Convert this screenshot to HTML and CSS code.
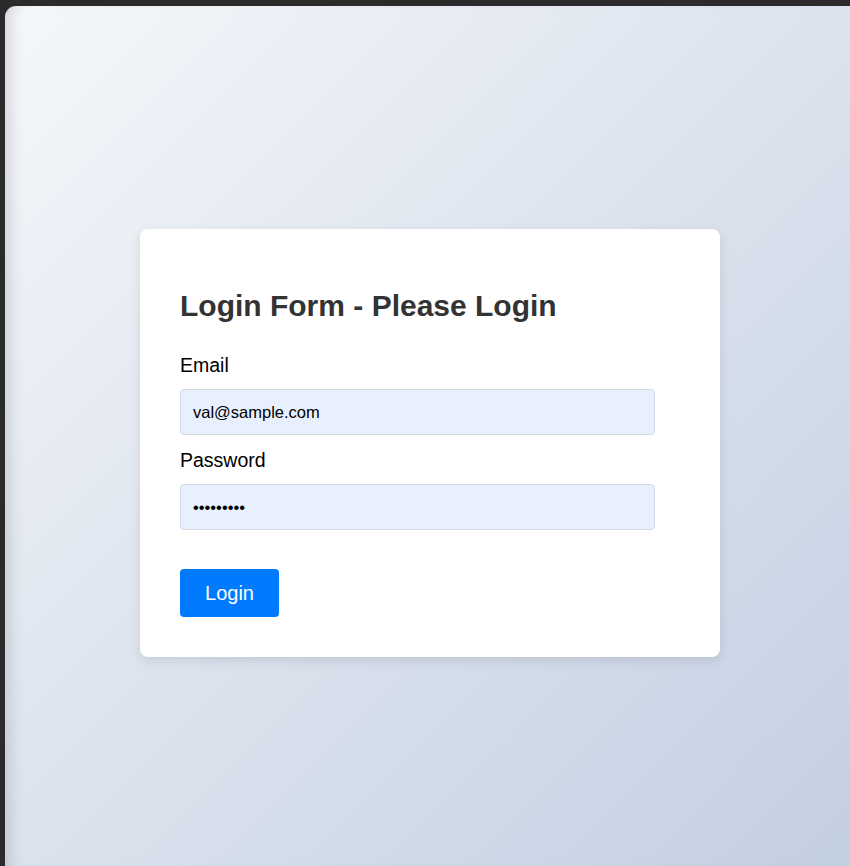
FILE: index.html
```html
<!DOCTYPE html>
<html lang="en">
<head>
<meta charset="utf-8">
<title>Login Form</title>
<link rel="stylesheet" href="styles.css">
</head>
<body>
<div class="window">
  <div class="page">
    <form class="card">
      <h2 class="title">Login Form - Please Login</h2>
      <label class="label" for="email">Email</label>
      <input class="field" id="email" type="text" value="val@sample.com">
      <label class="label" for="password">Password</label>
      <input class="field" id="password" type="password" value="123456789">
      <button class="btn" type="button">Login</button>
    </form>
  </div>
</div>
</body>
</html>
```

FILE: styles.css
```css
html, body {
  margin: 0;
  padding: 0;
  height: 100%;
  overflow: hidden;
}
body {
  background: #2b2b2b;
  font-family: "Liberation Sans", Arial, sans-serif;
}
.window {
  padding: 6px 0 0 5px;
  height: 100%;
  box-sizing: border-box;
}
.page {
  height: 100%;
  box-sizing: border-box;
  border-top-left-radius: 11px;
  background: linear-gradient(135deg, #f5f7fa 0%, #c3cfe2 100%);
  box-shadow: inset 14px 0 14px -8px rgba(0, 0, 0, 0.12);
  padding: 223px 0 0 135px;
}
.card {
  width: 580px;
  box-sizing: border-box;
  background: #fff;
  border-radius: 8px;
  box-shadow: 0 4px 12px rgba(0, 0, 0, 0.1);
  padding: 40px;
  display: flex;
  flex-direction: column;
  align-items: flex-start;
}
.title {
  margin: 20px 0 31px;
  font-size: 30px;
  line-height: 34px;
  font-weight: bold;
  color: #333;
}
.label {
  display: block;
  font-size: 19.5px;
  line-height: 22px;
  color: #000;
  margin-bottom: 13px;
}
.field {
  display: block;
  width: 475px;
  height: 46px;
  box-sizing: border-box;
  margin: 0 0 14px;
  padding: 0 12px;
  border: 1px solid #d6dbe3;
  border-radius: 4px;
  background: #e8f0fe;
  font-family: "Liberation Sans", Arial, sans-serif;
  font-size: 16.5px;
  color: #000;
  outline: none;
}
.btn {
  margin-top: 25px;
  width: 99px;
  height: 48px;
  border: none;
  border-radius: 4px;
  background: #007bff;
  color: #fff;
  font-family: "Liberation Sans", Arial, sans-serif;
  font-size: 20px;
  padding: 0;
  cursor: pointer;
}
```
